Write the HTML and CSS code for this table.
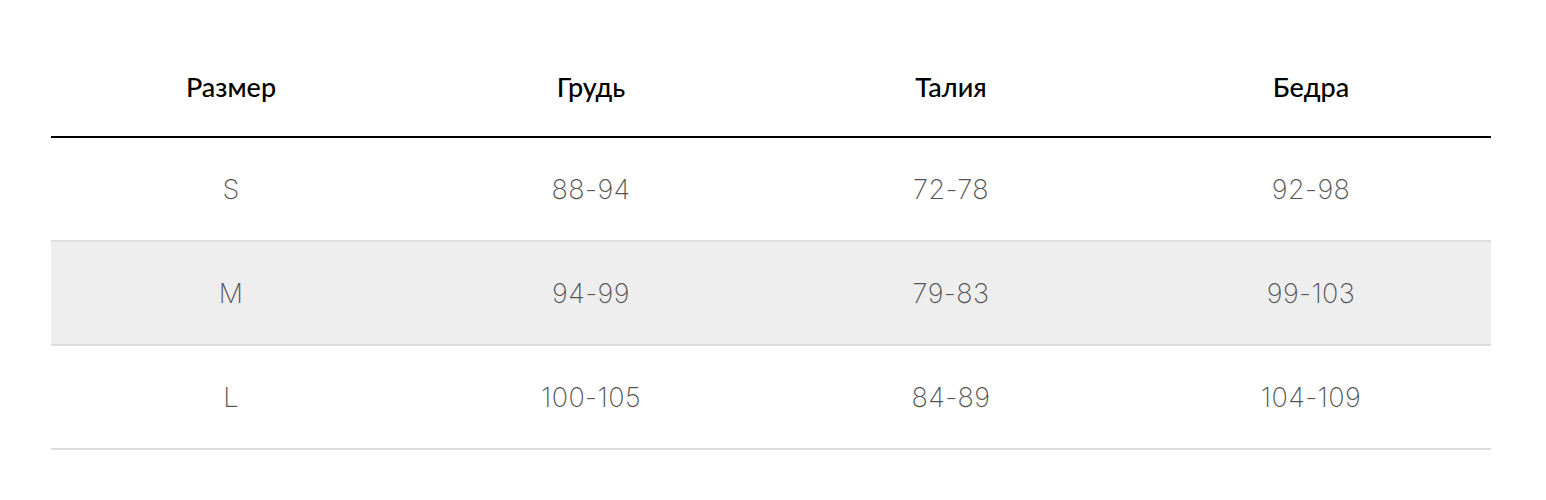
FILE: index.html
```html
<!DOCTYPE html>
<html lang="ru">
<head>
<meta charset="utf-8">
<title>Размеры</title>
<link rel="stylesheet" href="styles.css">
</head>
<body>
<div class="page">
  <div class="size-table">
    <div class="row head">
      <div class="cell">Размер</div>
      <div class="cell">Грудь</div>
      <div class="cell">Талия</div>
      <div class="cell">Бедра</div>
    </div>
    <div class="row">
      <div class="cell">S</div>
      <div class="cell">88-94</div>
      <div class="cell">72-78</div>
      <div class="cell">92-98</div>
    </div>
    <div class="row alt">
      <div class="cell">M</div>
      <div class="cell">94-99</div>
      <div class="cell">79-83</div>
      <div class="cell">99-103</div>
    </div>
    <div class="row">
      <div class="cell">L</div>
      <div class="cell">100-105</div>
      <div class="cell">84-89</div>
      <div class="cell">104-109</div>
    </div>
  </div>
</div>
</body>
</html>
```
FILE: styles.css
```css
html, body {
  margin: 0;
  padding: 0;
  background: #fff;
}
.page {
  padding: 36px 55px 0 51px;
}
.size-table {
  width: 1440px;
}
.row {
  display: grid;
  grid-template-columns: repeat(4, 1fr);
  height: 102px;
  align-items: center;
  border-bottom: 2px solid #dddddd;
  font-family: Inter, "Open Sans", sans-serif;
  font-weight: 200;
  font-size: 27px;
  letter-spacing: 0.4px;
  color: #555555;
}
.row.head {
  height: 100px;
  border-bottom: 2px solid #000;
  font-family: Lato, sans-serif;
  font-weight: 500;
  font-size: 27px;
  letter-spacing: 0;
  color: #000;
}
.row.alt {
  background: #eeeeee;
}
.cell {
  text-align: center;
}
```
